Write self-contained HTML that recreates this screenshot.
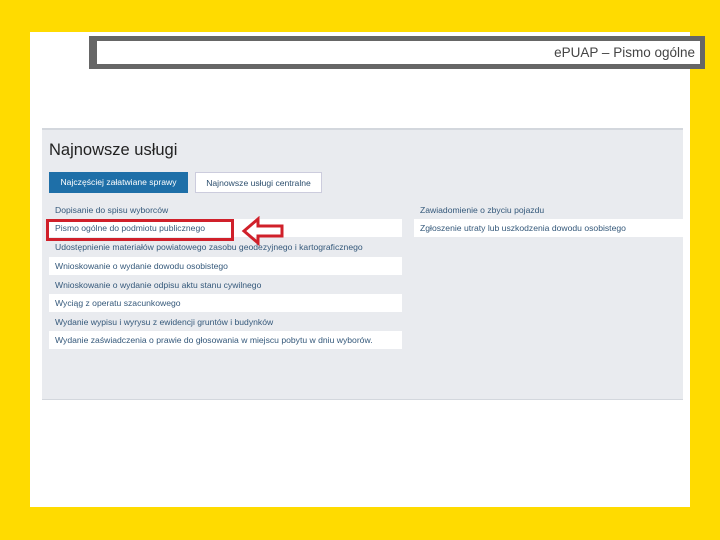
<!DOCTYPE html>
<html><head><meta charset="utf-8"><style>
*{margin:0;padding:0;box-sizing:border-box}
body{width:720px;height:540px;background:#FFDB00;position:relative;overflow:hidden;font-family:"Liberation Sans",sans-serif}
.page{position:absolute;left:30px;top:32px;width:660px;height:475px;background:#fff}
.tbox{position:absolute;left:89px;top:36px;width:616px;height:33px;border:5px solid #666;border-left-width:8px;background:#fff;text-align:right;font-size:13.5px;color:#444;padding-right:5px;line-height:23px}
.panel{position:absolute;left:42px;top:128px;width:641px;height:272px;background:#e9ebef;border-top:2px solid #d3d7dd;border-bottom:1px solid #d3d7dd}
h1{position:absolute;left:49px;top:141px;font-size:16.5px;font-weight:normal;color:#222}
.b{position:absolute;top:172px;height:21px;font-size:8.6px;line-height:21px;text-align:center}
.row{position:absolute;height:18px;font-size:8.6px;line-height:18px;color:#34587a;padding-left:6px;white-space:nowrap}
.w{background:#fff}
</style></head><body>
<div class="page"></div>
<div class="tbox">ePUAP – Pismo ogólne</div>
<div class="panel"></div>
<h1>Najnowsze usługi</h1>
<div class="b" style="left:49px;width:139px;background:#1e6fa8;color:#fff">Najczęściej załatwiane sprawy</div>
<div class="b" style="left:195px;width:127px;background:#fff;border:1px solid #ccd;color:#2d4f6e">Najnowsze usługi centralne</div>
<div class="row" style="left:49px;width:353px;top:201px">Dopisanie do spisu wyborców</div>
<div class="row w" style="left:49px;width:353px;top:219px">Pismo ogólne do podmiotu publicznego</div>
<div class="row" style="left:49px;width:353px;top:238px">Udostępnienie materiałów powiatowego zasobu geodezyjnego i kartograficznego</div>
<div class="row w" style="left:49px;width:353px;top:257px">Wnioskowanie o wydanie dowodu osobistego</div>
<div class="row" style="left:49px;width:353px;top:276px">Wnioskowanie o wydanie odpisu aktu stanu cywilnego</div>
<div class="row w" style="left:49px;width:353px;top:294px">Wyciąg z operatu szacunkowego</div>
<div class="row" style="left:49px;width:353px;top:313px">Wydanie wypisu i wyrysu z ewidencji gruntów i budynków</div>
<div class="row w" style="left:49px;width:353px;top:331px">Wydanie zaświadczenia o prawie do głosowania w miejscu pobytu w dniu wyborów.</div>
<div class="row" style="left:414px;width:269px;top:201px">Zawiadomienie o zbyciu pojazdu</div>
<div class="row w" style="left:414px;width:269px;top:219px">Zgłoszenie utraty lub uszkodzenia dowodu osobistego</div>
<div style="position:absolute;left:46px;top:219px;width:188px;height:22px;border:3px solid #d0202a"></div>
<svg style="position:absolute;left:240px;top:216px" width="46" height="30"><path d="M4 15 L18 3 L18 10 L42 10 L42 20 L18 20 L18 27 Z" fill="none" stroke="#d0202a" stroke-width="3" stroke-linejoin="miter"/></svg>
</body></html>
